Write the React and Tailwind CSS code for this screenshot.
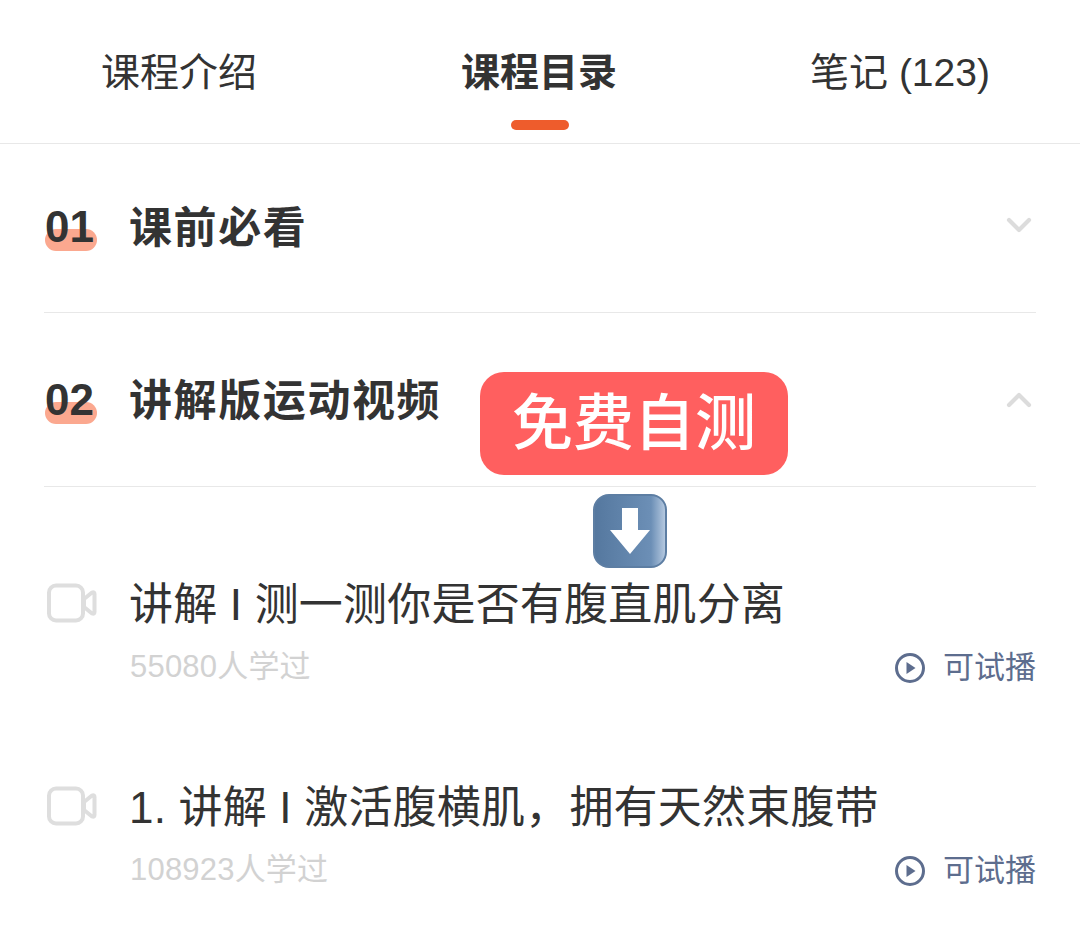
import React from 'react';
import { ChevronDown, ChevronUp } from 'lucide-react';

const VideoIcon = () => (
  <svg width="50" height="40" viewBox="0 0 50 40" fill="none" stroke="#dedede" strokeWidth="4" strokeLinejoin="round" className="shrink-0">
    <rect x="2" y="2.5" width="34" height="35" rx="7" />
    <path d="M37 16 L45 9.5 Q47.5 8.5 47.5 11 V29 Q47.5 31.5 45 30.5 L37 24 Z" />
  </svg>
);

const PlayIcon = () => (
  <svg width="32" height="32" viewBox="0 0 32 32" fill="none" className="shrink-0">
    <circle cx="16" cy="16" r="13.5" stroke="#5d6d8e" strokeWidth="3" />
    <path d="M12.5 10 L21.5 16 L12.5 22 Z" fill="#5d6d8e" />
  </svg>
);

const Section = ({ num, title, open, height, top, chevronTop }) => (
  <div className={`flex justify-between border-b border-[#e8e8e8] ${height}`}>
    <div className={`flex items-start ${top}`}>
      <div className="relative w-[86px] shrink-0">
        <span className="absolute left-[1px] top-[25px] w-[52px] h-[22px] rounded-full bg-[#fba88f]" />
        <span className="relative block -mt-[1px] ml-[1px] text-[44px] leading-[48px] font-bold text-[#333]">{num}</span>
      </div>
      <h2 className="text-[43px] leading-[48px] font-bold text-[#333] tracking-[1.6px] -ml-[1px]">{title}</h2>
    </div>
    <div className={`${chevronTop} -mr-[3px]`}>
      {open
        ? <ChevronUp size={40} color="#dcdcdc" strokeWidth={2.5} />
        : <ChevronDown size={40} color="#dcdcdc" strokeWidth={2.5} />}
    </div>
  </div>
);

const Lesson = ({ title, count, className }) => (
  <div className={`flex ${className}`}>
    <div className="w-[86px] shrink-0 pt-[8px] ml-[3px] -mr-[3px]">
      <VideoIcon />
    </div>
    <div className="flex-1">
      <p className="text-[44px] leading-[60px] text-[#333] tracking-[0.2px] -ml-[1px]">{title}</p>
      <div className="flex items-center justify-between mt-[9px]">
        <span className="text-[31px] leading-[44px] text-[#d2d2d2] tracking-[0.2px]">{count}人学过</span>
        <span className="flex items-center gap-[17px] text-[31px] leading-[44px] text-[#5d6d8e] pt-[2px]">
          <PlayIcon />
          可试播
        </span>
      </div>
    </div>
  </div>
);

export default function App() {
  return (
    <div className="relative h-[932px] w-full overflow-hidden bg-white font-['Liberation_Sans','Noto_Sans_CJK_SC',sans-serif]">
      <div className="grid grid-cols-3 h-[144px] border-b border-[#e8e8e8] text-center text-[39px] text-[#333]">
        <div className="pt-[47px] leading-[52px] -ml-[2px]">课程介绍</div>
        <div className="pt-[47px] leading-[52px] font-bold flex flex-col items-center">
          <span className="-ml-[2px]">课程目录</span>
          <span className="mt-[21px] w-[58px] h-[10px] rounded-full bg-[#ee5c2c]" />
        </div>
        <div className="pt-[47px] leading-[52px]">笔记 (123)</div>
      </div>

      <div className="px-[44px]">
        <Section num="01" title="课前必看" height="h-[169px]" top="pt-[60px]" chevronTop="pt-[61px]" />
        <Section num="02" title="讲解版运动视频" open height="h-[174px]" top="pt-[64px]" chevronTop="pt-[67px]" />
        <Lesson className="pt-[88px]" title="讲解 I 测一测你是否有腹直肌分离" count="55080" />
        <Lesson className="pt-[88px]" title="1. 讲解 I 激活腹横肌，拥有天然束腹带" count="108923" />
      </div>

      <div className="absolute left-[480px] top-[372px] w-[308px] h-[103px] rounded-[24px] bg-[#ff5f5f] flex items-center justify-center pt-[3px] text-[61px] font-medium text-white">
        免费自测
      </div>

      <div className="absolute left-[593px] top-[494px] w-[74px] h-[74px] rounded-[16px] border-2 border-[#5d7ea3] bg-gradient-to-r from-[#55789f] via-[#6c8fb6] via-80% to-[#b4c8df] flex items-center justify-center">
        <svg width="42" height="50" viewBox="0 0 42 50" fill="white">
          <path d="M13 2 H29 V24 H41 L21 48 L1 24 H13 Z" />
        </svg>
      </div>
    </div>
  );
}
